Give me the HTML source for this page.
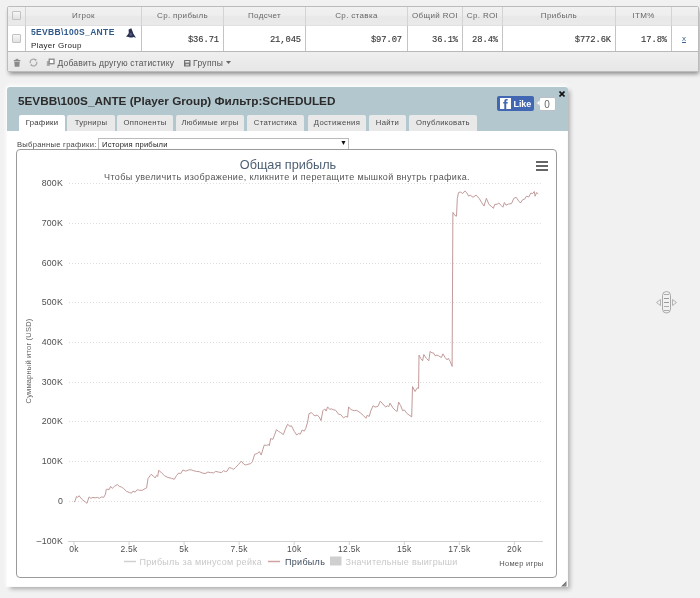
<!DOCTYPE html>
<html><head><meta charset="utf-8">
<style>
*{margin:0;padding:0;box-sizing:border-box}
html,body{width:700px;height:598px;overflow:hidden;background:#f1f1f1;font-family:"Liberation Sans",sans-serif;position:relative}
.a{position:absolute}
/* table */
#tbl{left:7px;top:6px;width:692px;height:66px;border:1px solid #bcbcbc;border-radius:2px;background:#ececec;box-shadow:1px 3px 4px -1px rgba(0,0,0,.42)}
#thead{left:8px;top:7px;width:690px;height:19px;background:linear-gradient(#f1f1f1 0%,#eeeeee 45%,#e8e8e8 55%,#eaeaea 100%);border-bottom:1px solid #e0e0e0}
#trow{left:8px;top:26px;width:690px;height:26px;background:#fff;border-bottom:1px solid #b9b9b9}
#tfoot{left:8px;top:52px;width:690px;height:19px;background:linear-gradient(#efefef,#e7e7e7)}
.vs{width:1px;background:#d4d4d4}
.vd{width:1px;background:#c4c4c4}
.th{top:7px;height:18px;line-height:17px;text-align:center;font-size:8px;color:#666;letter-spacing:.35px}
.td{top:28px;height:25px;line-height:25px;text-align:right;font-family:"Liberation Mono",monospace;font-weight:normal;font-size:8.8px;color:#333;letter-spacing:-.1px;-webkit-text-stroke:.15px #555}
.cb{width:9px;height:9px;border:1px solid #c2c2c2;border-radius:1px;background:linear-gradient(#f6f6f6,#e2e2e2)}
/* dialog */
#dlg{left:6px;top:86px;width:562px;height:501px;background:#fff;border:1px solid #fbfbfb;border-radius:4px 4px 0 0;box-shadow:3px 3px 4px -1px rgba(0,0,0,.3),0 -1px 4px rgba(255,255,255,.9)}
#dhead{left:7px;top:87px;width:561px;height:44px;background:#b2c7ce;border-radius:3px 3px 0 0}
#title{left:18px;top:94px;font-size:11.75px;font-weight:bold;color:#2b2b2b;white-space:nowrap}
.tab{top:115px;height:16px;background:#e9e9e9;border-radius:2px 2px 0 0;font-size:7.7px;color:#4a4a4a;text-align:center;line-height:16.5px;letter-spacing:.3px;white-space:nowrap}
.tab.act{background:#fff;color:#333}
#fb{left:497px;top:96px;width:37px;height:15px;background:#4267b2;border-radius:2px}
#cnt{left:538.5px;top:96.5px;width:17px;height:14px;background:#fff;border:1px solid #bcc0c6;border-radius:2px;font-size:10px;color:#666;text-align:center;line-height:13px}
#chart{left:16px;top:149px;width:541px;height:429px;border:1px solid #9a9a9a;border-radius:4px;background:#fff}
svg{position:absolute;left:0;top:0}
.gl{stroke:#dedede;stroke-width:1;stroke-dasharray:1 2}
.tk{stroke:#d0d0d0;stroke-width:1}
.yl{font-size:8.8px;fill:#4e4e4e;text-anchor:end;letter-spacing:.2px}
.xl{font-size:8.5px;fill:#4e4e4e;text-anchor:middle;letter-spacing:.3px}
#root{position:absolute;left:0;top:0;width:700px;height:598px;will-change:transform}
</style></head><body><div id="root">
<!-- top table -->
<div id="tbl" class="a"></div>
<div id="thead" class="a"></div>
<div id="trow" class="a"></div>
<div id="tfoot" class="a"></div>
<div class="a vs" style="left:25px;top:7px;height:19px"></div>
<div class="a vs" style="left:141px;top:7px;height:19px"></div>
<div class="a vs" style="left:223px;top:7px;height:19px"></div>
<div class="a vs" style="left:305px;top:7px;height:19px"></div>
<div class="a vs" style="left:407px;top:7px;height:19px"></div>
<div class="a vs" style="left:462px;top:7px;height:19px"></div>
<div class="a vs" style="left:502px;top:7px;height:19px"></div>
<div class="a vs" style="left:615px;top:7px;height:19px"></div>
<div class="a vs" style="left:671px;top:7px;height:19px"></div>
<div class="a vd" style="left:25px;top:26px;height:25px"></div>
<div class="a vd" style="left:141px;top:26px;height:25px"></div>
<div class="a vd" style="left:223px;top:26px;height:25px"></div>
<div class="a vd" style="left:305px;top:26px;height:25px"></div>
<div class="a vd" style="left:407px;top:26px;height:25px"></div>
<div class="a vd" style="left:462px;top:26px;height:25px"></div>
<div class="a vd" style="left:502px;top:26px;height:25px"></div>
<div class="a vd" style="left:615px;top:26px;height:25px"></div>
<div class="a vd" style="left:671px;top:26px;height:25px"></div>
<div class="a cb" style="left:12px;top:11px"></div>
<div class="a cb" style="left:12px;top:34px"></div>
<div class="a th" style="left:26px;width:115px">Игрок</div>
<div class="a th" style="left:142px;width:81px">Ср. прибыль</div>
<div class="a th" style="left:224px;width:81px">Подсчет</div>
<div class="a th" style="left:306px;width:101px">Ср. ставка</div>
<div class="a th" style="left:408px;width:54px">Общий ROI</div>
<div class="a th" style="left:463px;width:39px">Ср. ROI</div>
<div class="a th" style="left:503px;width:112px">Прибыль</div>
<div class="a th" style="left:616px;width:55px">ITM%</div>
<div class="a" style="left:31px;top:27px;font-size:8.5px;font-weight:bold;color:#30598a;letter-spacing:.35px;white-space:nowrap">5EVBB\100S_ANTE</div>
<div class="a" style="left:31px;top:41px;font-size:8px;color:#222;letter-spacing:.3px;white-space:nowrap">Player Group</div>
<svg class="a" style="left:122px;top:25px" width="18" height="16" viewBox="0 0 18 16"><path d="M9.3 3.2 L6.6 4.6 L6.8 8 Q5.5 10.5 4 11.5 L6.5 12 Q9 13 11.5 12 L14 12.8 Q12.5 10.5 11.3 8.5 Q10.5 6 9.3 3.2 Z" fill="#2b3152"/><ellipse cx="8.8" cy="9.3" rx="1.3" ry="1.6" fill="#6a7090" opacity=".6"/></svg>
<div class="a td" style="left:142px;width:77px">$36.71</div>
<div class="a td" style="left:224px;width:77px">21,045</div>
<div class="a td" style="left:306px;width:96px">$97.07</div>
<div class="a td" style="left:408px;width:50px">36.1%</div>
<div class="a td" style="left:463px;width:35px">28.4%</div>
<div class="a td" style="left:503px;width:108px">$772.6K</div>
<div class="a td" style="left:616px;width:51px">17.8%</div>
<div class="a" style="left:682px;top:34px;font-size:8px;color:#3d6591;text-decoration:underline">x</div>
<!-- footer icons -->
<svg class="a" style="left:12px;top:58px" width="10" height="10" viewBox="0 0 10 10"><rect x="3.6" y="0.8" width="2.8" height="1.2" fill="#999"/><rect x="1.8" y="2" width="6.5" height="1.3" fill="#8a8a8a"/><path d="M2.3 3.7 L7.7 3.7 L7.3 8.8 L2.7 8.8Z" fill="#8a8a8a"/></svg>
<svg class="a" style="left:29px;top:58px" width="9" height="9" viewBox="0 0 9 9"><path d="M1.4 5.2 A3.1 3.1 0 0 1 6.6 2.1" stroke="#a8a8a8" stroke-width="1.2" fill="none"/><path d="M7.6 3.8 A3.1 3.1 0 0 1 2.4 6.9" stroke="#a8a8a8" stroke-width="1.2" fill="none"/><path d="M5.6 0.8 L7.9 1.6 L6.4 3.4Z" fill="#a8a8a8"/><path d="M3.4 8.2 L1.1 7.4 L2.6 5.6Z" fill="#a8a8a8"/></svg>
<svg class="a" style="left:46px;top:58px" width="9" height="9" viewBox="0 0 9 9"><rect x="0.8" y="3" width="3" height="5" fill="#aaa"/><rect x="3.2" y="1.2" width="4.8" height="4.5" fill="#fff" stroke="#888" stroke-width="1.3"/></svg>
<div class="a" style="left:57.5px;top:58px;font-size:8.5px;color:#555;letter-spacing:.18px;white-space:nowrap">Добавить другую статистику</div>
<svg class="a" style="left:183.5px;top:59.5px" width="7" height="7" viewBox="0 0 7 7"><rect x="0" y="0" width="6.5" height="6.5" rx=".6" fill="#707070"/><rect x="1.2" y="1" width="4.1" height="1.6" fill="#e8e8e8"/><rect x="1.6" y="3.8" width="3.3" height="1.8" fill="#cfcfcf"/></svg>
<div class="a" style="left:193px;top:58px;font-size:8.5px;color:#555;letter-spacing:.3px;white-space:nowrap">Группы</div>
<svg class="a" style="left:226px;top:61px" width="5" height="3" viewBox="0 0 5 3"><path d="M0 0 L5 0 L2.5 3Z" fill="#666"/></svg>

<!-- dialog -->
<div id="dlg" class="a"></div>
<div id="dhead" class="a"></div>
<div id="title" class="a">5EVBB\100S_ANTE (Player Group) Фильтр:SCHEDULED</div>
<div class="a tab act" style="left:19px;width:46px;height:17px">Графики</div>
<div class="a tab" style="left:67px;width:48px">Турниры</div>
<div class="a tab" style="left:117px;width:56px">Оппоненты</div>
<div class="a tab" style="left:176px;width:68px">Любимые игры</div>
<div class="a tab" style="left:247px;width:57px">Статистика</div>
<div class="a tab" style="left:308px;width:58px">Достижения</div>
<div class="a tab" style="left:369px;width:37px">Найти</div>
<div class="a tab" style="left:409px;width:68px">Опубликовать</div>
<div id="fb" class="a"></div>
<div class="a" style="left:499.5px;top:98px;width:11px;height:11px;background:#fff;overflow:hidden"><div style="position:absolute;left:3.5px;top:0px;font-size:14px;font-weight:bold;color:#4267b2;line-height:14px">f</div></div>
<div class="a" style="left:513.5px;top:98.5px;font-size:9px;font-weight:bold;color:#fff;line-height:11px;letter-spacing:-.1px">Like</div>
<div id="cnt" class="a">0</div>
<svg class="a" style="left:536px;top:100px" width="4" height="6" viewBox="0 0 4 6"><path d="M4 0 L0.5 3 L4 6Z" fill="#fff" stroke="#c8cbd0" stroke-width=".8"/></svg>
<svg class="a" style="left:559px;top:91px" width="6" height="6" viewBox="0 0 6 6"><path d="M0.5 0.5 L5.5 5.5 M5.5 0.5 L0.5 5.5" stroke="#111" stroke-width="1.6"/></svg>
<div class="a" style="left:17px;top:140px;font-size:7.6px;color:#444;letter-spacing:.26px;white-space:nowrap">Выбранные графики:</div>
<div class="a" style="left:98px;top:138px;width:251px;height:12px;background:#fff;border:1px solid #bbb;border-bottom-color:#777"></div>
<div class="a" style="left:102px;top:140px;font-size:7.6px;color:#222;letter-spacing:.2px;white-space:nowrap">История прибыли</div>
<div class="a" style="left:340px;top:139px;font-size:7px;color:#111">▼</div>
<div id="chart" class="a"></div>
<svg width="700" height="598" viewBox="0 0 700 598">
<line x1="69" y1="183.5" x2="543" y2="183.5" class="gl"/><text x="63" y="186.0" class="yl">800K</text><line x1="69" y1="223.5" x2="543" y2="223.5" class="gl"/><text x="63" y="226.0" class="yl">700K</text><line x1="69" y1="263.5" x2="543" y2="263.5" class="gl"/><text x="63" y="266.0" class="yl">600K</text><line x1="69" y1="302.5" x2="543" y2="302.5" class="gl"/><text x="63" y="305.0" class="yl">500K</text><line x1="69" y1="342.5" x2="543" y2="342.5" class="gl"/><text x="63" y="345.0" class="yl">400K</text><line x1="69" y1="382.5" x2="543" y2="382.5" class="gl"/><text x="63" y="385.0" class="yl">300K</text><line x1="69" y1="421.5" x2="543" y2="421.5" class="gl"/><text x="63" y="424.0" class="yl">200K</text><line x1="69" y1="461.5" x2="543" y2="461.5" class="gl"/><text x="63" y="464.0" class="yl">100K</text><line x1="69" y1="501.5" x2="543" y2="501.5" class="gl"/><text x="63" y="504.0" class="yl">0</text><text x="63" y="543.5" class="yl">–100K</text>
<line x1="68" y1="541.5" x2="543" y2="541.5" stroke="#d0d0d0" stroke-width="1"/>
<line x1="74.0" y1="541" x2="74.0" y2="545" class="tk"/><text x="74.0" y="551.5" class="xl">0k</text><line x1="129.05" y1="541" x2="129.05" y2="545" class="tk"/><text x="129.05" y="551.5" class="xl">2.5k</text><line x1="184.1" y1="541" x2="184.1" y2="545" class="tk"/><text x="184.1" y="551.5" class="xl">5k</text><line x1="239.14999999999998" y1="541" x2="239.14999999999998" y2="545" class="tk"/><text x="239.14999999999998" y="551.5" class="xl">7.5k</text><line x1="294.2" y1="541" x2="294.2" y2="545" class="tk"/><text x="294.2" y="551.5" class="xl">10k</text><line x1="349.25" y1="541" x2="349.25" y2="545" class="tk"/><text x="349.25" y="551.5" class="xl">12.5k</text><line x1="404.29999999999995" y1="541" x2="404.29999999999995" y2="545" class="tk"/><text x="404.29999999999995" y="551.5" class="xl">15k</text><line x1="459.34999999999997" y1="541" x2="459.34999999999997" y2="545" class="tk"/><text x="459.34999999999997" y="551.5" class="xl">17.5k</text><line x1="514.4" y1="541" x2="514.4" y2="545" class="tk"/><text x="514.4" y="551.5" class="xl">20k</text>
<path d="M74,502.1 L75.1,500.7 L76.6,496.4 L77.7,497.4 L79.1,495.7 L80.1,497.1 L82.3,499.7 L85.1,501.7 L87,503.3 L88,500 L89.1,496.9 L90.9,498.3 L93,497.4 L95.1,497.9 L97.3,497.4 L99.4,498.3 L101.6,496.9 L103.7,497.4 L105.4,494.3 L106.3,489.3 L109.4,489.3 L110.6,486.4 L112.3,488.3 L114.4,486.4 L117.3,484.6 L119.4,486.4 L121.6,487.1 L123.7,488.6 L126.6,491.4 L129.4,492.6 L131.6,493.1 L133,491.1 L135.1,492.1 L137.3,489.7 L139.4,490.3 L142.3,490.3 L145.1,488.6 L146.6,487.9 L148,478.6 L150.1,475.7 L151.1,474.3 L153.7,476.4 L155.1,477.9 L156.6,475.4 L157.7,476.4 L158.7,470.3 L160.9,472.1 L164.4,475.7 L168,477.5 L171.4,478.3 L174.3,479.3 L176.4,475.7 L178.6,473.1 L180.7,473.6 L182.9,470 L185.7,471.1 L188.6,470 L190.7,469.7 L193.6,470.7 L196.4,471.4 L199.3,471.7 L202.1,472.9 L205,473.6 L207.9,472.1 L210.7,472.6 L213.6,472.9 L215.7,471.4 L218.6,472.1 L221.4,472.6 L223.6,470.7 L225.7,471.7 L227.1,471.1 L229.3,467.4 L231.4,468.3 L233.6,469.3 L235.7,467.4 L238.6,464.3 L241.4,461.1 L243.6,464 L245.7,465 L247.9,464.3 L250.7,463.6 L252.4,461.7 L254.7,454.3 L257.1,453.6 L259.3,451.7 L261.2,455 L262.9,449.3 L264.3,445 L266.4,445.4 L268.6,444.6 L269.3,445.7 L270.7,438.6 L272.9,439.3 L274.3,435.7 L276.4,429.7 L278.6,431.4 L280.7,432.6 L283.3,434.6 L285.3,429.3 L287.6,424.3 L290,426.4 L291.4,425.7 L294.3,431.4 L296.7,435 L298.6,433.6 L300.4,434 L302.1,430 L304.3,431.1 L305.7,428.6 L307.6,422.1 L309,413.6 L311.4,412.6 L312.9,414.3 L315,416 L317.1,415 L319.3,417.1 L321,420.7 L322.9,410.7 L324.7,408.9 L326.1,411.1 L327.6,406.9 L329.6,409.3 L331.4,408.9 L333.3,409.7 L335.7,410.3 L338.6,414.3 L340.7,414.6 L343.6,417.9 L345.7,416.4 L347.6,417.1 L348.6,406.9 L350.7,409.3 L352.1,410 L354.3,410.7 L356.4,410.3 L357.9,411.1 L360.7,413.1 L363.6,415.7 L366,418.3 L367.1,415.4 L369.3,416.4 L370.7,411.1 L373.1,405.7 L375,407.1 L377.9,406.4 L380.3,401.1 L382.9,404 L385.7,407.1 L387.4,405.7 L388.6,406.9 L390,403.1 L392.9,407.9 L395.7,410.7 L397.1,411.4 L398.6,402.1 L400.7,405.7 L402.6,410.7 L404.3,410 L407.1,413.6 L410,415.7 L411.7,416.9 L412.5,386.5 L415,391.5 L417.3,387.8 L418.6,388.4 L419,355.1 L420.7,358.3 L422.6,360.8 L423.8,354.5 L426.3,358.3 L428.8,360.8 L430.1,351.4 L432,352.9 L433.5,352.9 L435.1,355.8 L437,355.1 L438.6,355.8 L441.4,357.6 L442.9,353.9 L445.2,357.6 L447,359.9 L448.3,358.3 L450.2,361.4 L452.1,366.4 L452.9,212.4 L454.9,215.5 L456.5,216.2 L457.3,198.6 L458.5,192.6 L460.4,192 L462.8,193.5 L464.8,191 L466.7,192.6 L468.6,196.2 L470.2,195.1 L473,197.3 L476.1,195.1 L479.3,198.6 L481.6,202.5 L484,206.1 L486.4,198.3 L489,204.5 L491.1,206.1 L493.4,208.3 L494.7,204.5 L497.4,204.1 L498.9,203 L501.3,205.6 L502.9,207.2 L504.4,202.5 L506,205.2 L508.4,204.1 L511.5,203.6 L513.9,198.3 L516.2,197.3 L518.6,200.9 L520.5,203 L522.5,199.8 L524.9,198.9 L526.4,196.2 L528.8,197 L530.8,193.1 L532.7,193.5 L534.3,191.5 L535.1,196.2 L536.6,192.6 L538.2,193.9" fill="none" stroke="#c29a9a" stroke-width="1"/>
<text x="288" y="169" font-size="12.7px" fill="#4d5f73" text-anchor="middle">Общая прибыль</text>
<text x="287" y="179.5" font-size="9px" fill="#555" text-anchor="middle" letter-spacing=".37">Чтобы увеличить изображение, кликните и перетащите мышкой внутрь графика.</text>
<rect x="536" y="161" width="12" height="2" fill="#666"/>
<rect x="536" y="165" width="12" height="2" fill="#666"/>
<rect x="536" y="169" width="12" height="2" fill="#666"/>
<text transform="translate(31,361) rotate(-90)" font-size="7.5px" fill="#666" text-anchor="middle" letter-spacing=".2">Суммарный итог (USD)</text>
<line x1="124" y1="561.5" x2="136" y2="561.5" stroke="#d0d0d0" stroke-width="1.5"/>
<text x="139.5" y="565" font-size="9px" fill="#c8c8c8" letter-spacing=".3">Прибыль за минусом рейка</text>
<line x1="268" y1="561.5" x2="280" y2="561.5" stroke="#d0a0a0" stroke-width="1.5"/>
<text x="285" y="565" font-size="9px" fill="#3e4b5c" letter-spacing=".3">Прибыль</text>
<rect x="330" y="556.5" width="11.5" height="9" fill="#cfcfcf"/>
<text x="345.5" y="565" font-size="9px" fill="#c8c8c8" letter-spacing=".3">Значительные выигрыши</text>
<text x="543.5" y="566" font-size="7.5px" fill="#555" text-anchor="end" letter-spacing=".25">Номер игры</text>
<path d="M566.5 581 L566.5 586.5 L561 586.5Z" fill="#777"/><path d="M566.5 584 L564 586.5" stroke="#bbb" stroke-width=".6"/>
<!-- scroll widget -->
<rect x="662.5" y="291.5" width="8" height="21.5" rx="4" fill="none" stroke="#a0a0a0" stroke-width=".9"/>
<line x1="664" y1="294.5" x2="669" y2="294.5" stroke="#aaa"/>
<line x1="664" y1="298.5" x2="669" y2="298.5" stroke="#999"/>
<line x1="664" y1="302.5" x2="669" y2="302.5" stroke="#999"/>
<line x1="664" y1="306.5" x2="669" y2="306.5" stroke="#aaa"/>
<line x1="664" y1="310.5" x2="669" y2="310.5" stroke="#aaa"/>
<path d="M660.5 299.5 L656.5 302.5 L660.5 305.5Z" fill="none" stroke="#aaa" stroke-width=".9"/>
<path d="M672.5 299.5 L676.5 302.5 L672.5 305.5Z" fill="none" stroke="#aaa" stroke-width=".9"/>
</svg>
</div></body></html>
